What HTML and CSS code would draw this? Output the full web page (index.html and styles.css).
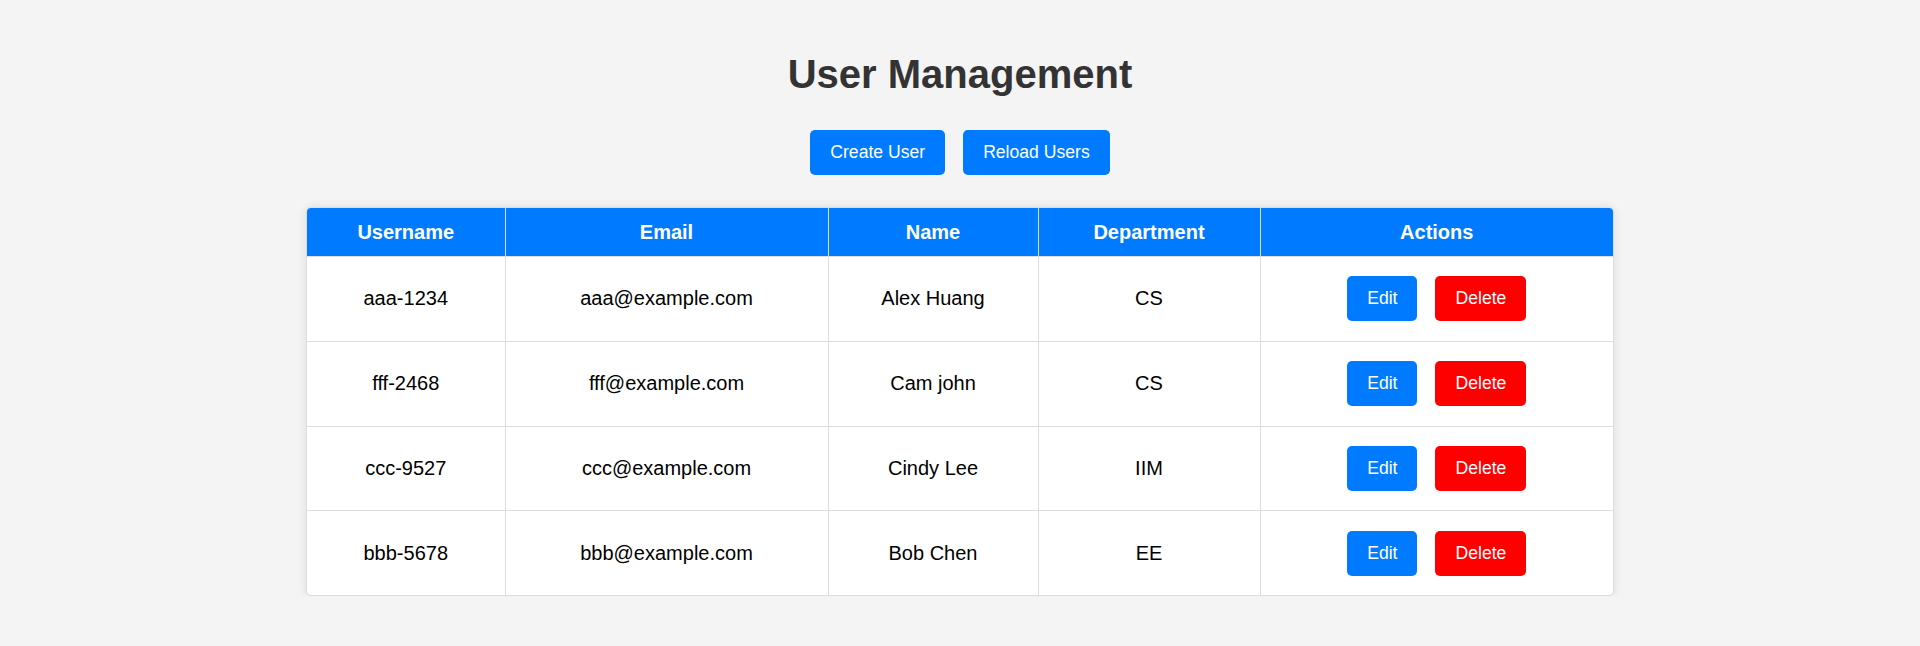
FILE: index.html
```html
<!DOCTYPE html>
<html lang="en">
<head>
<meta charset="utf-8">
<title>User Management</title>
<link rel="stylesheet" href="styles.css">
</head>
<body>
  <h1 class="title">User Management</h1>
  <div class="toolbar">
    <button class="btn btn-primary">Create User</button>
    <button class="btn btn-primary">Reload Users</button>
  </div>
  <div class="table-wrap">
    <table class="users">
      <colgroup>
        <col class="c-user">
        <col class="c-email">
        <col class="c-name">
        <col class="c-dept">
        <col class="c-actions">
      </colgroup>
      <thead>
        <tr>
          <th>Username</th>
          <th>Email</th>
          <th>Name</th>
          <th>Department</th>
          <th>Actions</th>
        </tr>
      </thead>
      <tbody>
        <tr>
          <td>aaa-1234</td>
          <td>aaa@example.com</td>
          <td>Alex Huang</td>
          <td>CS</td>
          <td><div class="actions"><button class="btn btn-primary">Edit</button><button class="btn btn-danger">Delete</button></div></td>
        </tr>
        <tr>
          <td>fff-2468</td>
          <td>fff@example.com</td>
          <td>Cam john</td>
          <td>CS</td>
          <td><div class="actions"><button class="btn btn-primary">Edit</button><button class="btn btn-danger">Delete</button></div></td>
        </tr>
        <tr>
          <td>ccc-9527</td>
          <td>ccc@example.com</td>
          <td>Cindy Lee</td>
          <td>IIM</td>
          <td><div class="actions"><button class="btn btn-primary">Edit</button><button class="btn btn-danger">Delete</button></div></td>
        </tr>
        <tr>
          <td>bbb-5678</td>
          <td>bbb@example.com</td>
          <td>Bob Chen</td>
          <td>EE</td>
          <td><div class="actions"><button class="btn btn-primary">Edit</button><button class="btn btn-danger">Delete</button></div></td>
        </tr>
      </tbody>
    </table>
  </div>
</body>
</html>
```

FILE: styles.css
```css
html, body {
  margin: 0;
  padding: 0;
}
body {
  background: #f4f4f4;
  font-family: "Liberation Sans", Arial, sans-serif;
  color: #000;
  padding-top: 51px;
}
.title {
  margin: 0 0 33px;
  text-align: center;
  font-size: 40px;
  font-weight: bold;
  line-height: 46px;
  color: #333;
}
.toolbar {
  display: flex;
  justify-content: center;
  gap: 18px;
  margin-bottom: 32px;
}
.btn {
  font-family: "Liberation Sans", Arial, sans-serif;
  font-size: 17.6px;
  line-height: 21px;
  padding: 12px 20px;
  border: none;
  border-radius: 5px;
  color: #fff;
  cursor: pointer;
}
.btn-primary {
  background: #007bff;
}
.btn-danger {
  background: #ff0000;
}
.table-wrap {
  box-sizing: border-box;
  width: 1308px;
  margin: 0 auto;
  border: 1px solid #ddd;
  border-radius: 5px;
  overflow: hidden;
  box-shadow: 0 0 10px rgba(0, 0, 0, 0.1);
  background: #fff;
}
.users {
  width: 100%;
  border-collapse: collapse;
  border-style: hidden;
  table-layout: fixed;
  font-size: 20px;
}
.c-user { width: 198px; }
.c-email { width: 323px; }
.c-name { width: 210px; }
.c-dept { width: 222px; }
.c-actions { width: 353px; }
.users th,
.users td {
  border: 1px solid #ddd;
  text-align: center;
}
.users th {
  background: #007bff;
  color: #fff;
  font-weight: bold;
  padding: 12.5px 10px;
  line-height: 23px;
}
.users td {
  padding: 19.4px 10px;
  line-height: 23px;
}
.actions {
  display: flex;
  justify-content: center;
  gap: 18px;
}
```
